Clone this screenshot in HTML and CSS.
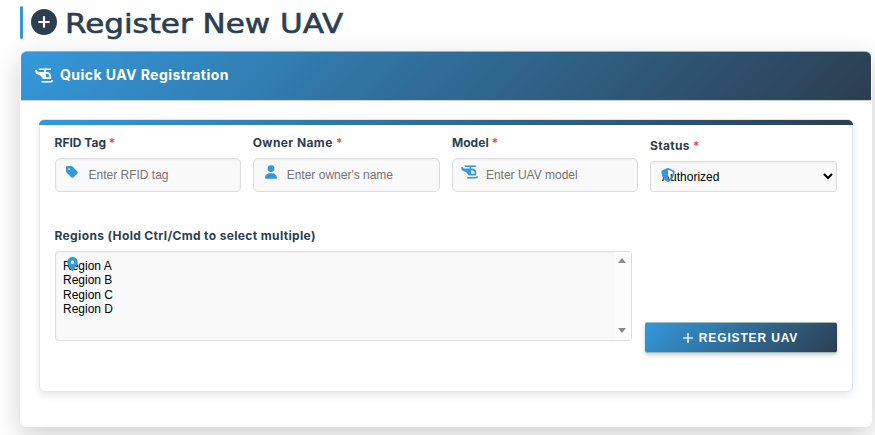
FILE: index.html
```html
<!DOCTYPE html>
<html lang="en">
<head>
<meta charset="utf-8">
<title>Register New UAV</title>
<link rel="stylesheet" href="styles.css">
</head>
<body>
<svg class="sprite" aria-hidden="true">
  <symbol id="heli" viewBox="0 0 640 512"><path d="M128 32c0-17.7 14.3-32 32-32H544c17.7 0 32 14.3 32 32s-14.3 32-32 32H384v64h32c88.4 0 160 71.6 160 160v64c0 17.7-14.3 32-32 32H384 320c-20.1 0-39.1-9.5-51.2-25.6l-71.4-95.2c-3.5-4.7-8.3-8.3-13.7-10.5L47.2 198.1c-9.5-3.8-16.7-12-19.2-22L5 83.9C2.4 73.8 10.1 64 20.5 64H48c10.1 0 19.6 4.7 25.6 12.8L112 128H320V64H160c-17.7 0-32-14.3-32-32zM384 320H512V288c0-53-43-96-96-96H384V320zM630.6 425.4c12.5 12.5 12.5 32.8 0 45.3l-3.9 3.9c-24 24-56.6 37.5-90.5 37.5H256c-17.7 0-32-14.3-32-32s14.3-32 32-32H536.2c17 0 33.3-6.7 45.3-18.7l3.9-3.9c12.5-12.5 32.8-12.5 45.3 0z"/></symbol>
</svg>
<h1 class="page-title">
  <svg class="title-icon" viewBox="0 0 26 26"><circle cx="13" cy="13" r="13" fill="#2c3e50"/><path d="M13 8.2v9.6M8.2 13h9.6" stroke="#fff" stroke-width="2.2" stroke-linecap="round"/></svg>
  <span class="title-text">Register New UAV</span>
</h1>
<section class="card">
  <header class="card-header">
    <svg class="header-icon" viewBox="0 0 640 512"><use href="#heli"/></svg>
    <span class="header-text">Quick UAV Registration</span>
  </header>
  <form class="panel">
    <div class="row">
      <div class="field">
        <label class="label rfid">RFID Tag <b class="req">*</b></label>
        <div class="control">
          <svg class="icon tag" viewBox="0 0 448 512"><path d="M0 80V229.5c0 17 6.7 33.3 18.7 45.3l176 176c25 25 65.5 25 90.5 0L418.7 317.3c25-25 25-65.5 0-90.5l-176-176c-12-12-28.3-18.7-45.3-18.7H48C21.5 32 0 53.5 0 80zm112 32a32 32 0 1 1 0 64 32 32 0 1 1 0-64z"/></svg>
          <input class="input" placeholder="Enter RFID tag">
        </div>
      </div>
      <div class="field">
        <label class="label owner">Owner Name <b class="req">*</b></label>
        <div class="control">
          <svg class="icon user" viewBox="0 0 448 512"><path d="M224 256A128 128 0 1 0 224 0a128 128 0 1 0 0 256zm-45.7 48C79.8 304 0 383.8 0 482.3C0 498.7 13.3 512 29.7 512H418.3c16.4 0 29.7-13.3 29.7-29.7C448 383.8 368.2 304 269.7 304H178.3z"/></svg>
          <input class="input" placeholder="Enter owner's name">
        </div>
      </div>
      <div class="field">
        <label class="label model">Model <b class="req">*</b></label>
        <div class="control">
          <svg class="icon heli" viewBox="0 0 640 512"><use href="#heli"/></svg>
          <input class="input" placeholder="Enter UAV model">
        </div>
      </div>
      <div class="field status">
        <label class="label">Status <b class="req">*</b></label>
        <div class="control">
          <select class="select"><option>Authorized</option></select>
          <svg class="icon shield" viewBox="0 0 512 512"><path d="M256 0c4.6 0 9.2 1 13.4 2.9L457.7 82.8c22 9.3 38.4 31 38.3 57.2c-.5 99.2-41.3 280.7-213.6 363.2c-16.7 8-36.1 8-52.8 0C57.3 420.7 16.5 239.2 16 140c-.1-26.2 16.3-47.9 38.3-57.2L242.7 2.9C246.8 1 251.4 0 256 0zm0 66.8V444.8C394 378 431.1 230.1 432 141.4L256 66.8z"/></svg>
        </div>
      </div>
    </div>
    <div class="row second">
      <div class="regions">
        <label class="label long">Regions (Hold Ctrl/Cmd to select multiple)</label>
        <div class="control listbox">
          <ul class="options"><li>Region A</li><li>Region B</li><li>Region C</li><li>Region D</li></ul>
          <div class="scrollbar"><i class="up"></i><i class="down"></i></div>
          <svg class="icon pin" viewBox="0 0 384 512"><circle cx="192" cy="192" r="90" fill="#fff"/><path d="M215.7 499.2C267 435 384 279.4 384 192C384 86 298 0 192 0S0 86 0 192c0 87.4 117 243 168.3 307.2c12.3 15.3 35.1 15.3 47.4 0zM192 128a64 64 0 1 1 0 128 64 64 0 1 1 0-128z"/></svg>
        </div>
      </div>
      <button class="submit" type="button"><svg class="plus" viewBox="0 0 10 10"><path d="M5 .7v8.6M.7 5h8.6" stroke="#d9e8f2" stroke-width="1.7" stroke-linecap="round"/></svg>REGISTER UAV</button>
    </div>
  </form>
</section>
</body>
</html>
```
FILE: styles.css
```css
* { box-sizing: border-box; }
body { margin: 0; padding: 6px 3px 0 20px; height: 435px; overflow: hidden; background: #fefefe; font-family: "Liberation Sans", sans-serif; color: #2c3e50; }
.sprite { display: none; }
.page-title { margin: 0 0 12px; height: 33px; display: flex; align-items: center; position: relative; padding-left: 11px; }
.page-title::before { content: ""; position: absolute; left: 0; top: 0; width: 3px; height: 33px; border-radius: 2px; background: #3498db; }
.title-icon { width: 26px; height: 26px; margin: -2px 8px 0 0; flex: none; }
.title-text { padding-top: 3px; font: 400 26px/33px "DejaVu Sans", sans-serif; white-space: nowrap; transform: scaleX(1.193); transform-origin: 0 50%; -webkit-text-stroke: .6px #2c3e50; }
.card { height: 376px; border-radius: 6px; background: #fff; border: 1px solid #fff; border-top: 0; box-shadow: 0 8px 24px rgba(0,0,0,.18); }
.card-header { height: 50px; display: flex; align-items: center; padding: 0 0 2px 14px; color: #fff; border-radius: 6px 6px 0 0; background: linear-gradient(135deg, #3498db, #2c3e50); border-bottom: 1px solid #c6d2dc; border-top: 1px solid #8bb4d0; }
.header-icon { width: 18px; height: 15px; fill: #fff; margin: 1px 7px 0 0; }
.header-text { font: 700 14px/20px Inter, sans-serif; letter-spacing: .45px; white-space: nowrap; }
.panel { position: relative; margin: 18px 18px 0; height: 273px; padding: 16px 15px 0 14.5px; border: 1px solid #d8e8f4; border-radius: 6px; background: #fff; box-shadow: 0 3px 8px rgba(0,0,0,.1); }
.panel::before { content: ""; position: absolute; inset: 0 -1px auto -1px; height: 5px; border-radius: 5px 5px 0 0; background: linear-gradient(135deg, #3498db, #2c3e50); }
.row { display: grid; grid-template-columns: 186px 187px 186px 187px; column-gap: 12.2px; }
.status { padding-top: 3px; }
.label { display: block; height: 14px; margin-bottom: 8px; font: 700 12px/14px Inter, sans-serif; white-space: nowrap; }
.owner { letter-spacing: .4px; }
.model { letter-spacing: .1px; }
.status .label { letter-spacing: .3px; }
.long { letter-spacing: .36px; }
.req { color: #e74c3c; font-weight: 600; }
.control { position: relative; }
.input, .select { display: block; width: 100%; height: 34px; border: 1px solid #ddd; border-radius: 5px; background: #f9f9f9; padding: 0 8px 0 33px; font: 12px "Liberation Sans", sans-serif; box-shadow: inset 0 1px 2px rgba(0,0,0,.05); }
.select { height: 31px; border-radius: 3px; padding: 0 0 0 7px; color: #000; }
.input::placeholder { color: #757575; }
.icon { position: absolute; fill: #3498db; }
.tag { left: 11px; top: 7px; width: 12px; height: 14px; }
.user { left: 12px; top: 7px; width: 12px; height: 14px; }
.heli { left: 9px; top: 7px; width: 17px; height: 14px; }
.shield { left: 11px; top: 7px; width: 14px; height: 14px; }
.second { grid-template-columns: 577px 192px; column-gap: 13px; margin-top: 37px; align-items: end; }
.listbox { height: 90px; border: 1px solid #ddd; border-radius: 3px; background: #f9f9f9; display: flex; justify-content: space-between; box-shadow: inset 0 1px 2px rgba(0,0,0,.05); }
.options { margin: 0; padding: 7px 0 0 7.5px; list-style: none; font-size: 12px; line-height: 14.4px; color: #000; }
.scrollbar { width: 16px; background: #fcfcfc; display: flex; flex-direction: column; justify-content: space-between; align-items: center; padding: 6px 1px 7px 0; }
.up, .down { border: 4.5px solid transparent; border-top: 0; border-bottom: 5px solid #8a8a8a; }
.down { border-bottom: 0; border-top: 5px solid #8a8a8a; }
.pin { left: 11px; top: 5px; width: 11px; height: 14px; }
.submit { height: 31px; margin-bottom: -12px; border: 1px solid #9fb8b8; border-width: 1px 0; border-radius: 2px; background: linear-gradient(135deg, #3498db, #2c3e50); color: #fff; font: 700 12px "Liberation Sans", sans-serif; letter-spacing: .85px; display: flex; align-items: center; justify-content: center; padding: 0; box-shadow: 0 2px 4px rgba(0,0,0,.2); }
.plus { width: 10px; height: 10px; margin-right: 6px; }
```
